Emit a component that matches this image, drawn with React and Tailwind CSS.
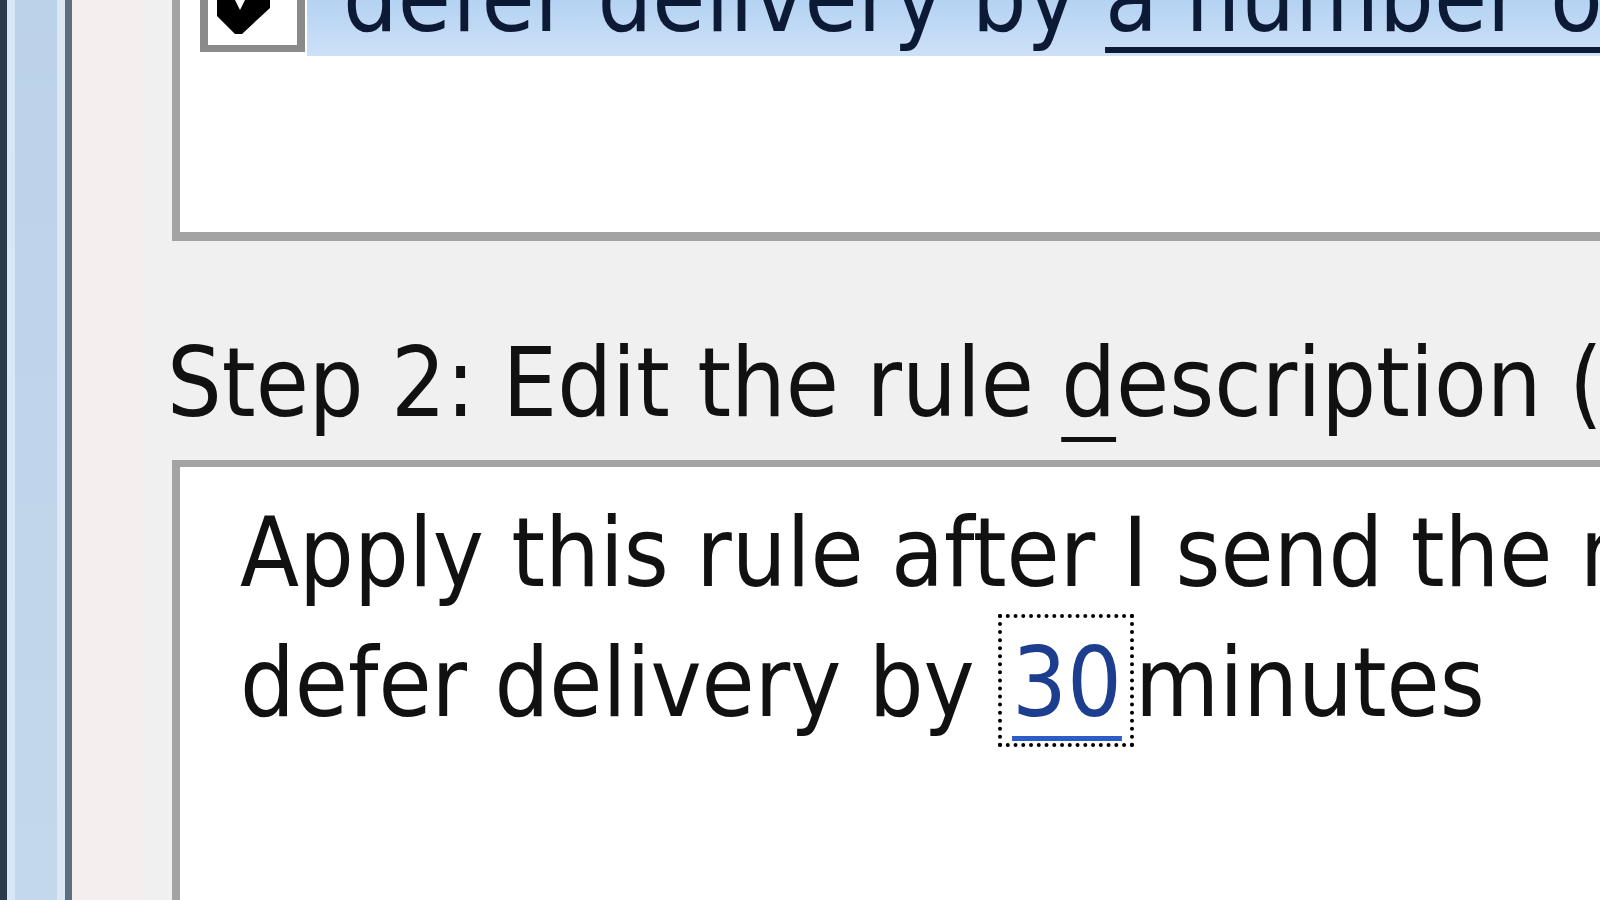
import React from "react";

export default function App() {
  return (
    <div className="w-[1600px] h-[900px] overflow-hidden flex bg-[#f0f0f0] font-['DejaVu_Sans_Condensed','DejaVu_Sans',sans-serif] font-stretch-condensed text-black">
      {/* window frame */}
      <div className="w-[72px] h-full flex shrink-0">
        <div className="w-[7px] bg-[#2b3949]" />
        <div className="w-[8px] bg-[#d8e7f5]" />
        <div className="w-[42px] bg-linear-to-b from-[#bcd2e9] to-[#c4d8ec]" />
        <div className="w-[8px] bg-[#dbe8f4]" />
        <div className="w-[7px] bg-[#5d6f81]" />
      </div>
      <div className="w-[73px] h-full shrink-0 bg-[#f4efee]" />
      {/* dialog content */}
      <div className="flex-1 min-w-0 flex flex-col pl-[22px]">
        {/* rule list */}
        <div className="ml-[5px] h-[241px] shrink-0 border-l-8 border-b-[9px] border-[#a3a3a3] bg-white overflow-hidden">
          <div className="flex h-[56px]">
            <div className="ml-[20px] w-[105px] h-[52px] shrink-0 border-x-8 border-b-[7px] border-[#8a8a8a] bg-white overflow-hidden">
              <svg width="89" height="45" viewBox="0 0 89 45">
                <polygon
                  points="9,0 27,0 32,10 37,0 62,0 62,8 34,34 27,34 9,16"
                  fill="#000"
                />
              </svg>
            </div>
            <div className="flex-1 min-w-0 ml-[2px] overflow-hidden bg-linear-to-b from-[#b4d2f2] to-[#cde1f7] pl-[36px]">
              <div className="-mt-[50px] text-[96px] leading-none whitespace-nowrap text-[#0c1a35]">
                defer delivery by{" "}
                <span className="underline decoration-[6px] underline-offset-[16px]">
                  a number of minutes
                </span>
              </div>
            </div>
          </div>
        </div>

        {/* step 2 label */}
        <div className="mt-[94px] text-[96px] leading-none whitespace-nowrap text-[#111]">
          Step 2: Edit the rule{" "}
          <span className="underline decoration-[5px] underline-offset-[21px]">d</span>
          escription (click an underlined value)
        </div>

        {/* rule description */}
        <div className="mt-[29px] ml-[5px] flex-1 border-l-8 border-t-[7px] border-[#a3a3a3] bg-white overflow-hidden pt-[21px] pl-[60px] text-[96px] leading-[130px] whitespace-nowrap text-[#111]">
          <div>Apply this rule after I send the message</div>
          <div>
            defer delivery by{" "}
            <span className="-ml-[4px] border-4 border-dotted border-black pt-[9px] pb-[4px] pl-[10px] pr-[8px] text-[#1d3d8f] underline decoration-[#2c5cc8] decoration-[5px] underline-offset-[20px]">
              30
            </span>
            <span className="text-[4px]"> </span>
            <span>minutes</span>
          </div>
        </div>
      </div>
    </div>
  );
}
